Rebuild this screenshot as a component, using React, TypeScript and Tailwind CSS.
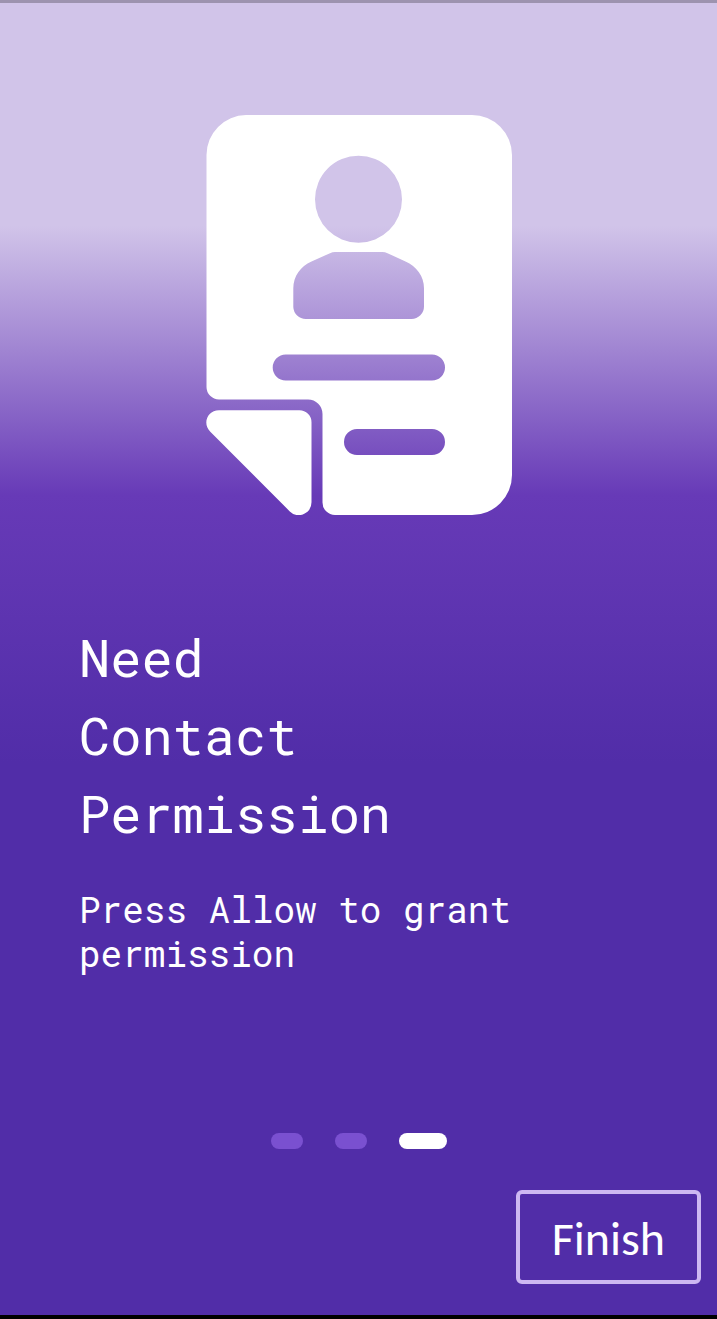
import React from "react";

function ContactDocumentIcon() {
  return (
    <svg
      viewBox="0 0 306 400"
      className="h-[400px] w-[306px] text-white"
      fill="currentColor"
      role="img"
      aria-label="Contact document"
    >
      <path
        fillRule="evenodd"
        d="M40 0H266A40 40 0 0 1 306 40V360A40 40 0 0 1 266 400H129A12.5 12.5 0 0 1 116.500 387.500V299A14.500 14.500 0 0 0 102 284.500H13A12.500 12.500 0 0 1 .5 272V40A40 40 0 0 1 40 0Z
           M152.500 40.800A43.500 43.500 0 1 0 152.500 127.800A43.500 43.500 0 1 0 152.500 40.800Z
           M129 137Q126.500 137 124 138.200L105.500 146.500C94.500 151.500 87.300 161 87.300 173.500V192A12.500 12.500 0 0 0 99.800 204H205.500A12.500 12.500 0 0 0 218 191.500V173.500C218 161 210.500 151.500 199.500 146.500L181.500 138.200Q179 137 176.500 137Z
           M79.700 239.500A13 13 0 0 0 79.700 265.500H226A13 13 0 0 0 226 239.500Z
           M151 314A13 13 0 0 0 151 340H226A13 13 0 0 0 226 314Z"
      />
      <path d="M13 295.200H93.500A12 12 0 0 1 105.500 307.200V387A12.800 12.800 0 0 1 83.800 396.400L4.300 316.800C-4 308.500 1.500 295.200 13 295.200Z" />
    </svg>
  );
}

const steps = [
  { label: "Step 1", active: false },
  { label: "Step 2", active: false },
  { label: "Step 3", active: true },
];

function StepIndicator() {
  return (
    <nav aria-label="Steps" className="flex justify-center gap-8">
      {steps.map((step) => (
        <button
          key={step.label}
          type="button"
          aria-label={step.label}
          aria-current={step.active ? "step" : undefined}
          className={
            step.active
              ? "h-4 w-12 rounded-full bg-white"
              : "h-4 w-8 rounded-full bg-[#7a50d0]"
          }
        />
      ))}
    </nav>
  );
}

export default function App() {
  return (
    <div className="flex min-h-screen flex-col border-t-[3px] border-b-4 border-t-[#9d93af] border-b-black bg-[linear-gradient(to_bottom,#d1c4e9_17%,#673ab7_37.5%,#512da8_58%)]">
      <main className="flex grow flex-col">
        <div className="flex justify-center pt-28">
          <ContactDocumentIcon />
        </div>
        <section className="px-[79px] pt-[103px] font-['Roboto_Mono','DejaVu_Sans_Mono',monospace] text-white">
          <h1 className="text-[52px] leading-[78px]">
            Need
            <br />
            Contact
            <br />
            Permission
          </h1>
          <p className="mt-[35px] max-w-[480px] text-4xl leading-[44px]">
            Press Allow to grant permission
          </p>
        </section>
      </main>
      <footer className="pt-10">
        <StepIndicator />
        <div className="flex justify-end px-4 pt-[41px] pb-[31px]">
          <button
            type="button"
            className="h-[94px] rounded-md border-4 border-[#cdb8f2] px-8 pt-1 font-['Carlito','Lato',sans-serif] text-5xl leading-[56px] text-white"
          >
            Finish
          </button>
        </div>
      </footer>
    </div>
  );
}
